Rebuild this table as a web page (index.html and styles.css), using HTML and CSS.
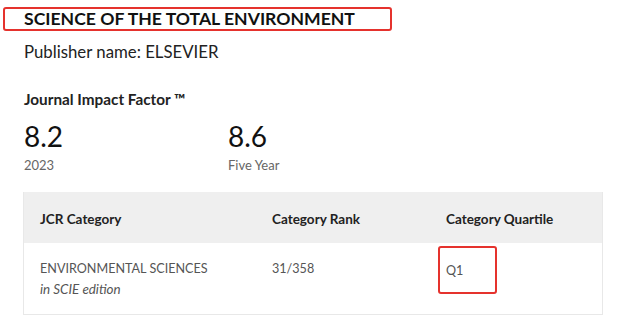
FILE: index.html
```html
<!DOCTYPE html>
<html>
<head>
<meta charset="utf-8">
<link rel="stylesheet" href="styles.css">
</head>
<body>
<div class="page">
  <div class="title-box"><h1 class="title">SCIENCE OF THE TOTAL ENVIRONMENT</h1></div>
  <p class="publisher">Publisher name: ELSEVIER</p>
  <h2 class="jif-label">Journal Impact Factor ™</h2>
  <div class="metrics">
    <div class="metric">
      <div class="metric-value">8.2</div>
      <div class="metric-caption">2023</div>
    </div>
    <div class="metric">
      <div class="metric-value">8.6</div>
      <div class="metric-caption">Five Year</div>
    </div>
  </div>
  <div class="cat-table">
    <div class="row head">
      <div class="cell">JCR Category</div>
      <div class="cell">Category Rank</div>
      <div class="cell">Category Quartile</div>
    </div>
    <div class="row body">
      <div class="cell">
        <div>ENVIRONMENTAL SCIENCES</div>
        <div class="edition">in SCIE edition</div>
      </div>
      <div class="cell">31/358</div>
      <div class="cell"><span class="q-box">Q1</span></div>
    </div>
  </div>
</div>
</body>
</html>
```
FILE: styles.css
```css
html, body {
  margin: 0;
  padding: 0;
  background: #fff;
}
body {
  font-family: Lato, "Open Sans", sans-serif;
  color: #1a1a1a;
}
.page {
  width: 625px;
  height: 325px;
  overflow: hidden;
  padding-top: 7px;
  box-sizing: border-box;
}
.title-box {
  margin-left: 3px;
  width: 389px;
  height: 24px;
  border: 2px solid #e5322d;
  border-radius: 3px;
  box-sizing: border-box;
  padding-left: 19px;
  display: flex;
  align-items: center;
}
.title {
  margin: 0;
  font-size: 17.6px;
  font-weight: 700;
  line-height: 20px;
  color: #111;
}
.publisher {
  margin: 11px 0 0 24px;
  font-size: 16.8px;
  line-height: 20px;
  color: #222;
}
.jif-label {
  margin: 28px 0 0 24px;
  font-size: 15.3px;
  font-weight: 700;
  line-height: 18px;
  color: #222;
}
.metrics {
  display: flex;
  margin: 12px 0 0 24px;
}
.metric {
  width: 204px;
}
.metric-value {
  font-size: 28px;
  line-height: 32px;
  color: #111;
}
.metric-caption {
  margin-top: 5px;
  font-size: 13px;
  line-height: 16px;
  color: #666;
}
.cat-table {
  margin: 19px 0 0 23px;
  width: 580px;
  border: 1px solid #e8e8e8;
  border-top: none;
  box-sizing: border-box;
}
.row {
  display: grid;
  grid-template-columns: 232px 174px 1fr;
  padding-left: 16px;
}
.head {
  background: #efefef;
  height: 51px;
  align-items: center;
  font-weight: 700;
  font-size: 13.5px;
  color: #222;
  padding-top: 3px;
  box-sizing: border-box;
}
.body {
  height: 71px;
  font-size: 12.6px;
  line-height: 20px;
  color: #555;
  padding-top: 4px;
  box-sizing: border-box;
}
.body .cell {
  padding-top: 12px;
}
.edition {
  font-style: italic;
  font-size: 13.4px;
}
.q-box {
  display: inline-block;
  margin-left: -8px;
  margin-top: -13px;
  padding: 13px 0 0 6px;
  width: 59px;
  height: 48px;
  border: 2px solid #e5322d;
  border-radius: 3px;
  box-sizing: border-box;
}
```
